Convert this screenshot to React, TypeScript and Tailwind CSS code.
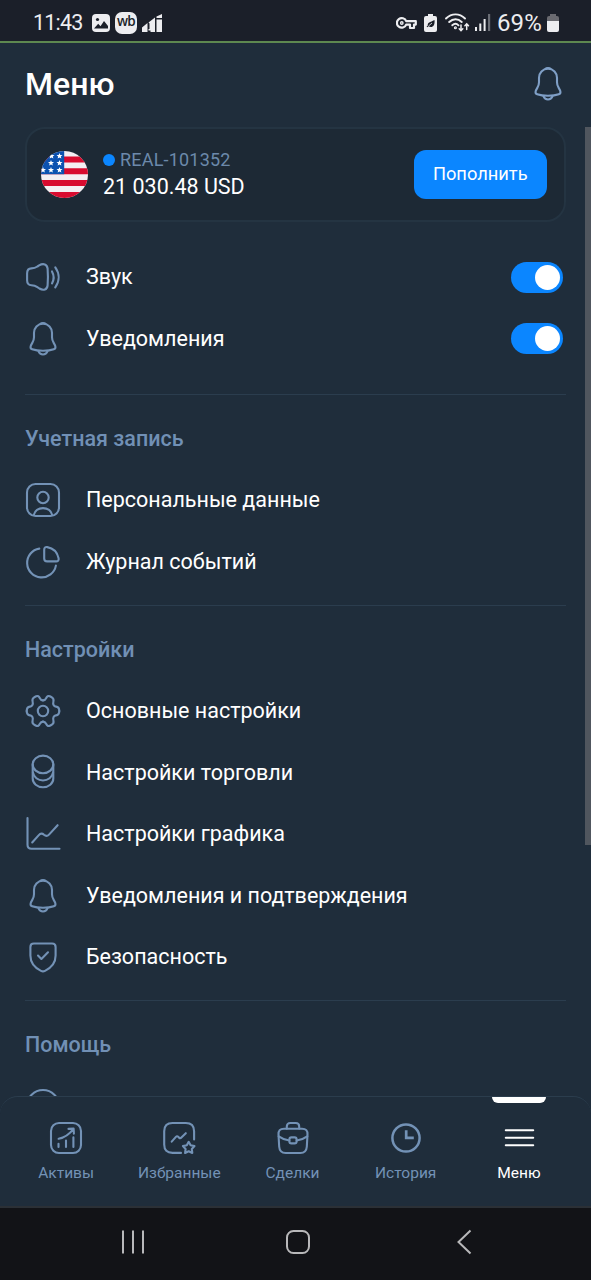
import type { ReactNode } from 'react'

type IconProps = { className?: string }

type Item = {
  label: string
  icon: (props: IconProps) => ReactNode
}

function Icon({ children, className = '' }: { children: ReactNode; className?: string }) {
  return (
    <svg
      viewBox="0 0 36 36"
      fill="none"
      stroke="currentColor"
      strokeWidth="2.1"
      strokeLinecap="round"
      strokeLinejoin="round"
      className={`size-9 shrink-0 ${className}`}
    >
      {children}
    </svg>
  )
}

function BellIcon({ className }: IconProps) {
  return (
    <Icon className={className}>
      <path d="M18 2.800C12.600 2.800 9 6.800 9 11.800v4.400c0 2.400-.6 3.800-1.700 5.700C5.500 24.900 4.500 27.300 7.200 28.300c2.800 1 6.700 1.500 10.800 1.500s8-.5 10.800-1.500c2.700-1 1.700-3.400-.1-6.400-1.100-1.900-1.700-3.300-1.700-5.700v-4.400c0-5-3.600-9-9-9z" />
      <path d="M15.400 2.900c1-1.300 4.200-1.300 5.200 0" />
      <path d="M13.400 30.200c.9 2.200 2.400 3.300 4.600 3.300s3.700-1.100 4.600-3.300" />
    </Icon>
  )
}

function SoundIcon({ className }: IconProps) {
  return (
    <Icon className={className}>
      <path d="M2.100 14.500c0-3.200 1.500-5.100 4.300-5.100 2.400 0 4.100-.5 6-1.900l1.700-1.100c4.500-2.600 8-1 8.500 3.100.4 5 .4 12 0 17-.5 4.100-4 5.600-8.200 3l-2-1.400c-1.900-1.400-3.600-1.900-6-1.900-2.800 0-4.300-1.800-4.300-5z" />
      <path d="M27 12.400c2.100 3.800 2.100 8.200 0 12" />
      <path d="M30.300 8.300c4.400 6.200 4.400 13.900 0 20.100" />
    </Icon>
  )
}

function PersonIcon({ className }: IconProps) {
  return (
    <Icon className={className}>
      <rect x="2" y="2" width="32" height="32" rx="8.500" />
      <circle cx="18" cy="15.500" r="5.700" />
      <path d="M8.800 33c.9-4.300 4.700-6.900 9.200-6.900s8.300 2.600 9.200 6.900" />
    </Icon>
  )
}

function PieIcon({ className }: IconProps) {
  return (
    <Icon className={className}>
      <path d="M14.300 4.600a14.500 14.500 0 1 0 16.600 17" />
      <path d="M19.200 5.700c0-1.900 1.200-2.900 3-2.600 5.800 1 10.200 5.400 11.400 11.200.4 1.900-.6 3.100-2.500 3.100h-8.900c-2 0-3-1-3-3z" />
    </Icon>
  )
}

// the cog outline is symmetric, so one quarter is mirrored four times
const COG_QUARTER =
  'M18 7.400c1.700 0 2.500-.9 3.100-2.200C22 3.300 23.200 2.500 24.800 3.300l2 1c1.700 1 2.100 2.400 1.600 4.200C27.700 11.200 28.700 13.300 31 13.600c2.400.3 3.300 1.600 3.300 4.400'

function CogIcon({ className }: IconProps) {
  return (
    <Icon className={className}>
      <path d={COG_QUARTER} />
      <path d={COG_QUARTER} transform="matrix(-1 0 0 1 36 0)" />
      <path d={COG_QUARTER} transform="matrix(1 0 0 -1 0 36)" />
      <path d={COG_QUARTER} transform="matrix(-1 0 0 -1 36 36)" />
      <circle cx="18" cy="18" r="5.200" />
    </Icon>
  )
}

function CoinsIcon({ className }: IconProps) {
  return (
    <Icon className={className}>
      <ellipse cx="18" cy="10.400" rx="10.300" ry="8.800" />
      <path d="M7.700 10.400v14.100c0 5 4.600 8.800 10.300 8.800s10.300-3.800 10.300-8.800V10.400" />
      <path d="M7.900 18.500c.9 4.700 5.100 8 10.100 8s9.200-3.300 10.100-8" />
    </Icon>
  )
}

function ChartIcon({ className }: IconProps) {
  return (
    <Icon className={className}>
      <path d="M2.500 2v26.800c0 2.600 1.400 4 4 4h28" />
      <path d="m7.200 26.500 6.600-7.400c1.700-1.900 3.500-1.900 5.200-.3 1.800 1.600 3.400 1.500 5-.2l8.600-9.400" />
    </Icon>
  )
}

function ShieldIcon({ className }: IconProps) {
  return (
    <Icon className={className}>
      <path d="M5.400 8c0-2.500 1-3.500 3.500-3.500h18.200c2.500 0 3.500 1 3.500 3.500v8.600c0 7.400-4.600 12.400-10.600 15.300-1.500.7-2.500.7-4 0C10 29 5.400 24 5.400 16.600z" />
      <path d="m13 16.600 3.400 3.400 6.600-6.700" />
    </Icon>
  )
}

function HelpIcon({ className }: IconProps) {
  return (
    <Icon className={className}>
      <circle cx="18" cy="18" r="16" />
    </Icon>
  )
}

function AssetsIcon() {
  return (
    <Icon>
      <rect x="3" y="3" width="30" height="30" rx="8" />
      <path d="M10.500 23.800v3.200M18 20.600V27M25.400 17.400V27" />
      <path d="M10.600 18.800c6-1.200 10.800-4.600 14.700-9.700M20.500 8.900l5.100-.3.300 5" />
    </Icon>
  )
}

function FavoritesIcon() {
  return (
    <Icon>
      <path d="M20 32.900h-8.500c-5.500 0-8.300-2.800-8.300-8.300V11.300C3.200 5.800 6 3 11.500 3h13.300c5.500 0 8.300 2.800 8.300 8.300v8.200" />
      <path d="m10.700 21.600 4.200-4.700c.8-.9 1.500-.9 2.300-.1l.8.800c.9.8 1.600.8 2.400-.1l4.400-4.300" />
      <path d="m27.700 21.800 1.900 3.500 3.900.8-2.700 2.900.5 4-3.600-1.700-3.600 1.700.5-4-2.700-2.900 3.900-.8z" />
    </Icon>
  )
}

function DealsIcon() {
  return (
    <Icon>
      <path d="M11.800 8.600V6.500c0-2.300 1.200-3.500 3.500-3.500h5.400c2.300 0 3.500 1.200 3.500 3.500v2.100" />
      <path d="M3.500 14.500C3.300 10.500 5 8.700 9 8.700h18c4 0 5.700 1.800 5.500 5.800l-.7 12.300c-.3 4.200-2.300 6.200-6.500 6.200H10.700c-4.200 0-6.200-2-6.500-6.200z" />
      <path d="M3.700 16.300c3.300 2.300 6.700 3.700 10.600 4.200M21.700 20.500c3.900-.5 7.300-1.900 10.600-4.200" />
      <rect x="14.400" y="17.400" width="7.200" height="6" rx="2" />
    </Icon>
  )
}

function HistoryIcon() {
  return (
    <Icon>
      <circle cx="18" cy="18" r="13.600" strokeWidth="2.500" />
      <path d="M18.200 10.300v7.600h7.600" strokeWidth="2.700" strokeLinecap="butt" strokeLinejoin="miter" />
    </Icon>
  )
}

function MenuIcon() {
  return (
    <Icon>
      <path d="M4.800 10.300h27.400M4.800 17.800h27.400M4.800 25.200h27.400" strokeWidth="2.100" />
    </Icon>
  )
}

const ACCOUNT: Item[] = [
  { label: 'Персональные данные', icon: PersonIcon },
  { label: 'Журнал событий', icon: PieIcon },
]

const SETTINGS: Item[] = [
  { label: 'Основные настройки', icon: CogIcon },
  { label: 'Настройки торговли', icon: CoinsIcon },
  { label: 'Настройки графика', icon: ChartIcon },
  { label: 'Уведомления и подтверждения', icon: BellIcon },
  { label: 'Безопасность', icon: ShieldIcon },
]

const HELP: Item[] = [{ label: '', icon: HelpIcon }]

const TABS: Item[] = [
  { label: 'Активы', icon: AssetsIcon },
  { label: 'Избранные', icon: FavoritesIcon },
  { label: 'Сделки', icon: DealsIcon },
  { label: 'История', icon: HistoryIcon },
  { label: 'Меню', icon: MenuIcon },
]

function StatusBar() {
  return (
    <div className="flex h-[43px] shrink-0 items-center border-b-2 border-[#5d8850] bg-[#1b1f29] pt-[4px] pr-8 pl-[33px] text-[#ededf0]">
      <span className="w-[59px] text-[21.5px] leading-none tracking-[-0.8px]">11:43</span>
      <svg viewBox="0 0 18 18" className="size-[18px]">
        <rect width="18" height="18" rx="4" fill="#ededf0" />
        <circle cx="5.500" cy="5.500" r="1.600" fill="#1b1f29" />
        <path d="m2 14.500 4.200-4.800 2.300 2.500L12 7l4 5v2.500z" fill="#1b1f29" />
      </svg>
      <span className="ml-[5px] flex size-[22px] items-center justify-center rounded-[7px] bg-[#ededf0] pb-px font-['Open_Sans',sans-serif] text-[13.5px] leading-none font-semibold tracking-[-0.6px] text-[#1b1f29]">
        wb
      </span>
      <svg viewBox="0 0 21 18" fill="#ededf0" className="ml-[5px] h-[18px] w-[21px]">
        <path d="M0 13.500 5.500 9v9H0zM6.500 8.500l6.500-5V18H8.500v-1.500H6.500V15h1V9.500zM14.500 2.500 20 0v4h-5.500zM14.500 5.500H20V18h-5.500z" />
      </svg>

      <div className="ml-auto flex items-center">
        <svg viewBox="0 0 21 14" fill="none" stroke="#ededf0" strokeWidth="2.200" className="h-[14px] w-[21px]">
          <path d="M10.200 5.200H19.800V8.600H18V12H14V8.600H10.200A4.800 4.800 0 1 1 10.200 5.200z" strokeLinejoin="round" />
          <circle cx="5.800" cy="7" r="1.200" strokeWidth="1.400" />
        </svg>
        <svg viewBox="0 0 13 18" className="ml-[7px] h-[18px] w-[13px]">
          <path d="M4 0h5v2h2a2 2 0 0 1 2 2v12a2 2 0 0 1-2 2H2a2 2 0 0 1-2-2V4a2 2 0 0 1 2-2h2z" fill="#ededf0" />
          <path d="M10.500 6c.5 4.500-1 7-3.700 7-1 0-1.700-.3-2.200-.8l-1.400 1-.6-.8 1.200-1C3.300 8.500 6 8.300 10.500 6z" fill="#1b1f29" />
          <path d="M4.500 12 8 9" stroke="#ededf0" strokeWidth=".8" />
        </svg>
        <svg viewBox="0 0 25 19" fill="none" stroke="#ededf0" strokeWidth="1.900" strokeLinecap="round" className="ml-2 h-[19px] w-[25px]">
          <path d="M1 5.500c5.500-5.500 13.500-5.500 19 0M4.200 9c3.800-3.700 8.800-3.700 12.500 0M7.300 12.300c2-1.900 4.300-1.900 6.200 0" />
          <circle cx="10.400" cy="14.800" r=".6" />
          <path d="M16 12v5.500M14.200 15.800l1.800 1.900 1.800-1.900M21.700 16.500V11M19.900 12.800l1.800-1.900 1.800 1.900" strokeWidth="1.500" />
        </svg>
        <svg viewBox="0 0 16 17" fill="#ededf0" className="ml-[5px] h-[17px] w-4">
          <path d="M0 13h2v4H0zM4.300 9.500h2V17h-2zM8.600 5h2v12h-2z" />
          <path d="M13 0h2.200v17H13z" fill="#6a6d75" />
        </svg>
        <span className="ml-[6px] w-[47px] text-[24px] leading-none tracking-[0.1px] whitespace-nowrap">69%</span>
        <svg viewBox="0 0 12 18" fill="#ededf0" className="ml-[3px] h-[18px] w-3">
          <path d="M3 0h6v2h1a2 2 0 0 1 2 2v3H0V4a2 2 0 0 1 2-2h1z" fill="#6a6a70" />
          <path d="M0 7h12v9a2 2 0 0 1-2 2H2a2 2 0 0 1-2-2z" />
        </svg>
      </div>
    </div>
  )
}

const STAR = 'M0-3.100.8-1 3-.9 1.300.5 1.900 2.600 0 1.400-1.900 2.600-1.300.5-3-.9-.8-1z'

const STARS = [
  [10.5, 5], [18.5, 5],
  [10, 12], [18.5, 12],
  [2, 19], [10, 19], [18.5, 19],
]

function UsFlag() {
  return (
    <svg viewBox="0 0 47 47" className="size-[47px] shrink-0 overflow-hidden rounded-full">
      <rect width="47" height="47" fill="#f4eef2" />
      <path d="M0 5.500h47v5.900H0zM0 17.300h47v5.900H0zM0 29.100h47V35H0zM0 41h47v6H0z" fill="#d80b2f" />
      <rect width="23.200" height="23.200" fill="#0c52b0" />
      {STARS.map(([x, y]) => (
        <path key={`${x}-${y}`} d={STAR} transform={`translate(${x} ${y})`} fill="#fff" />
      ))}
    </svg>
  )
}

function AccountCard() {
  return (
    <div className="flex h-[95px] items-center rounded-[20px] border-2 border-[#243442] bg-[#1d2935] pr-[17.5px] pl-[14px]">
      <UsFlag />
      <div className="ml-[15px] flex-1 pt-px">
        <p className="flex items-center gap-[5px] text-[18px] leading-6 tracking-[0.2px] text-[#6c89ab]">
          <span className="size-3 rounded-full bg-[#0b86ff]" />
          REAL-101352
        </p>
        <p className="text-[21.5px] leading-[30px] text-white">21 030.48 USD</p>
      </div>
      <button type="button" className="h-[49px] w-[132.500px] rounded-xl bg-[#0b86ff] pb-0.5 text-[18.3px] text-white">
        Пополнить
      </button>
    </div>
  )
}

function Row({ item, children }: { item: Item; children?: ReactNode }) {
  const ItemIcon = item.icon
  return (
    <li className="flex h-[61.6px] items-center">
      <ItemIcon className="text-[#7392b6]" />
      <span className="ml-[25px] flex-1 pt-[0.5px] text-[21.5px] text-white">{item.label}</span>
      {children}
    </li>
  )
}

function Toggle() {
  return (
    <span className="mr-[3px] flex h-[31px] w-[52px] items-center justify-end rounded-full bg-[#0b86ff] pr-[3px]">
      <span className="size-[25px] rounded-full bg-white" />
    </span>
  )
}

function Section({ title, items }: { title: string; items: Item[] }) {
  return (
    <section className="border-t border-[#2b3d4e] pt-[30px] pb-[12.3px]">
      <h2 className="mb-[16.2px] text-[21.5px] leading-7 font-medium text-[#7190b5]">{title}</h2>
      <ul>
        {items.map((item) => (
          <Row key={item.label} item={item} />
        ))}
      </ul>
    </section>
  )
}

function TabBar() {
  return (
    <nav className="flex h-[110px] shrink-0 rounded-t-[18px] border-t border-[#2b3d4d] bg-[#1f2d3b] pr-[15.5px] pl-[9.5px]">
      {TABS.map(({ label, icon: TabIcon }) => {
        const active = label === 'Меню'
        return (
          <div
            key={label}
            className={`relative flex flex-1 flex-col items-center pt-[23px] ${active ? 'text-white' : 'text-[#7392b6]'}`}
          >
            {active && <span className="absolute top-0 h-[6px] w-[54px] rounded-b-md bg-white" />}
            <TabIcon />
            <span className="mt-[7px] text-[15.5px] leading-5">{label}</span>
          </div>
        )
      })}
    </nav>
  )
}

function SystemNav() {
  return (
    <div className="flex h-[74px] shrink-0 items-center justify-between border-t-2 border-[#2b3036] bg-[#121317] pr-[111px] pb-1 pl-[119px] text-[#b8b8ba]">
      <svg viewBox="0 0 28 28" stroke="currentColor" strokeWidth="2" className="size-7">
        <path d="M4 2.500v23M14 2.500v23M24 2.500v23" />
      </svg>
      <svg viewBox="0 0 28 28" fill="none" stroke="currentColor" strokeWidth="2" className="size-7">
        <rect x="1" y="3" width="22" height="22" rx="6.500" />
      </svg>
      <svg viewBox="0 0 28 28" fill="none" stroke="currentColor" strokeWidth="2" className="size-7">
        <path d="M18.500 2.500 6.500 14l12 11.500" />
      </svg>
    </div>
  )
}

export default function App() {
  return (
    <div className="relative flex h-[1280px] w-[591px] flex-col overflow-hidden bg-[#1f2d3b] font-['Roboto',sans-serif]">
      <StatusBar />

      <header className="flex h-[84px] shrink-0 items-center justify-between pr-[25px] pb-[2px] pl-[25px]">
        <h1 className="text-[32px] font-medium text-white">Меню</h1>
        <BellIcon className="text-[#7f9fc6]" />
      </header>

      <main className="min-h-0 flex-1 overflow-hidden pr-[25px] pl-[25px]">
        <AccountCard />
        <ul className="mt-[24.500px] mb-[24.500px]">
          <Row item={{ label: 'Звук', icon: SoundIcon }}>
            <Toggle />
          </Row>
          <Row item={{ label: 'Уведомления', icon: BellIcon }}>
            <Toggle />
          </Row>
        </ul>
        <Section title="Учетная запись" items={ACCOUNT} />
        <Section title="Настройки" items={SETTINGS} />
        <Section title="Помощь" items={HELP} />
      </main>

      <TabBar />
      <SystemNav />

      {/* scrollbar thumb */}
      <div className="absolute top-[127px] right-0 h-[718px] w-[6px] bg-[#50565e]" />
    </div>
  )
}
